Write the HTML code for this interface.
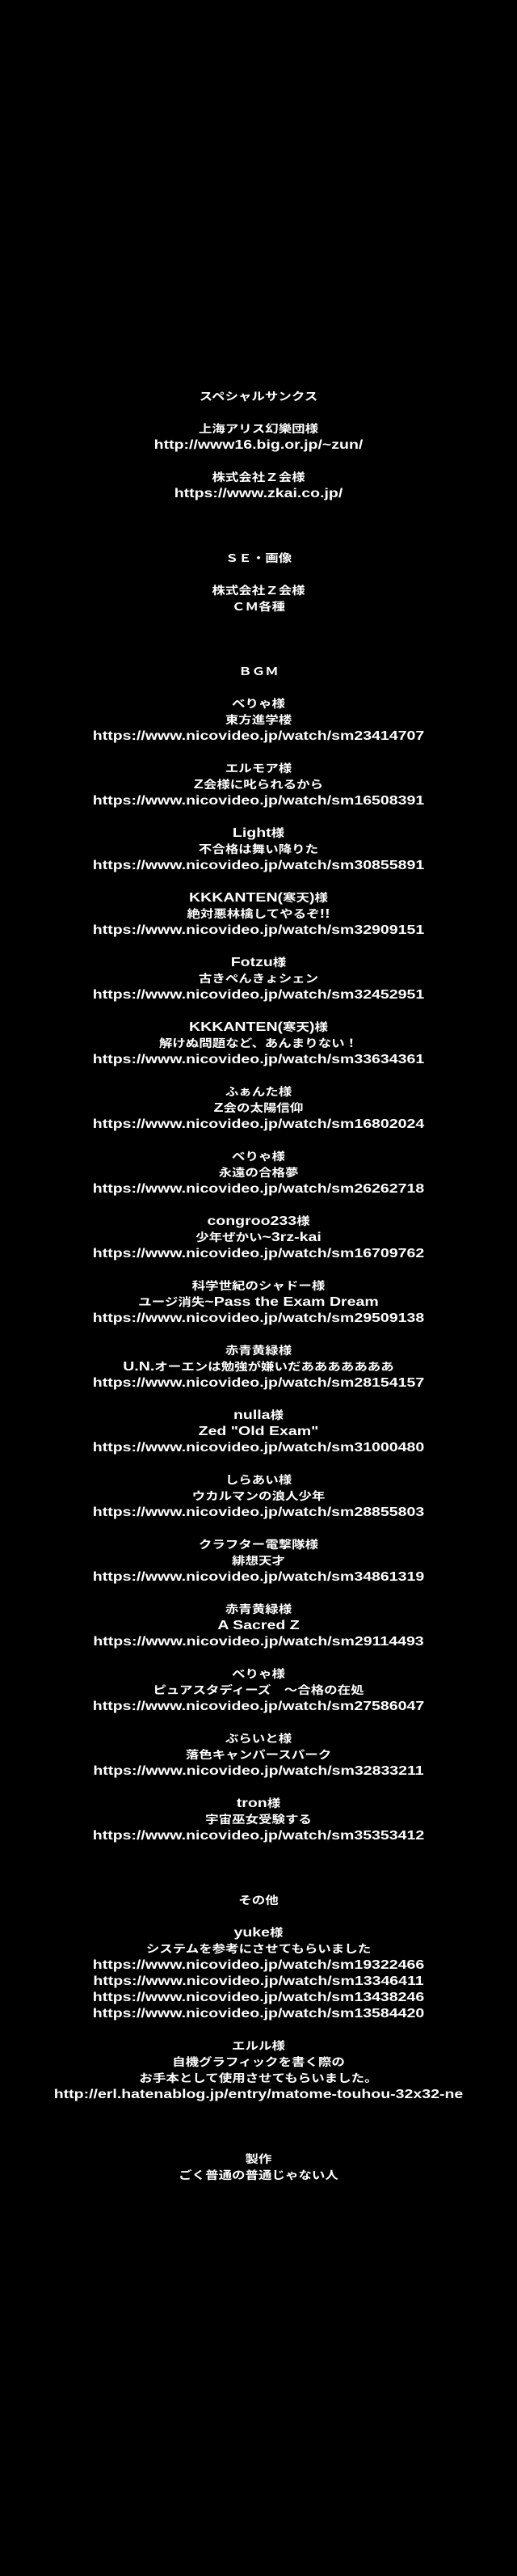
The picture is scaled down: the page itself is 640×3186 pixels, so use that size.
<!DOCTYPE html>
<html><head><meta charset="utf-8">
<style>
html,body{margin:0;padding:0;background:#000;}
body{width:640px;height:3186px;overflow:hidden;}
.c{white-space:pre;text-align:center;color:#fff;font-weight:bold;
font-family:"Liberation Sans","Noto Sans CJK JP",sans-serif;font-size:16px;line-height:20px;padding-top:481px;
transform:scaleX(1.22);transform-origin:320px 0;}
.j{font-size:13.5px;}
</style></head><body>
<div class="c"><span class="j">スペシャルサンクス</span>

<span class="j">上海アリス幻樂団様</span>
http://www16.big.or.jp/~zun/

<span class="j">株式会社Ｚ会様</span>
https://www.zkai.co.jp/



<span class="j">ＳＥ・画像</span>

<span class="j">株式会社Ｚ会様</span>
<span class="j">ＣＭ各種</span>



<span class="j">ＢＧＭ</span>

<span class="j">べりゃ様</span>
<span class="j">東方進学楼</span>
https://www.nicovideo.jp/watch/sm23414707

<span class="j">エルモア様</span>
Z<span class="j">会様に叱られるから</span>
https://www.nicovideo.jp/watch/sm16508391

Light<span class="j">様</span>
<span class="j">不合格は舞い降りた</span>
https://www.nicovideo.jp/watch/sm30855891

KKKANTEN(<span class="j">寒天</span>)<span class="j">様</span>
<span class="j">絶対悪林檎してやるぞ</span>!!
https://www.nicovideo.jp/watch/sm32909151

Fotzu<span class="j">様</span>
<span class="j">古きぺんきょシェン</span>
https://www.nicovideo.jp/watch/sm32452951

KKKANTEN(<span class="j">寒天</span>)<span class="j">様</span>
<span class="j">解けぬ問題など、あんまりない！</span>
https://www.nicovideo.jp/watch/sm33634361

<span class="j">ふぁんた様</span>
Z<span class="j">会の太陽信仰</span>
https://www.nicovideo.jp/watch/sm16802024

<span class="j">べりゃ様</span>
<span class="j">永遠の合格夢</span>
https://www.nicovideo.jp/watch/sm26262718

congroo233<span class="j">様</span>
<span class="j">少年ぜかい</span>~3rz-kai
https://www.nicovideo.jp/watch/sm16709762

<span class="j">科学世紀のシャドー様</span>
<span class="j">ユージ消失</span>~Pass the Exam Dream
https://www.nicovideo.jp/watch/sm29509138

<span class="j">赤青黄緑様</span>
U.N.<span class="j">オーエンは勉強が嫌いだあああああああ</span>
https://www.nicovideo.jp/watch/sm28154157

nulla<span class="j">様</span>
Zed "Old Exam"
https://www.nicovideo.jp/watch/sm31000480

<span class="j">しらあい様</span>
<span class="j">ウカルマンの浪人少年</span>
https://www.nicovideo.jp/watch/sm28855803

<span class="j">クラフター電撃隊様</span>
<span class="j">緋想天才</span>
https://www.nicovideo.jp/watch/sm34861319

<span class="j">赤青黄緑様</span>
A Sacred Z
https://www.nicovideo.jp/watch/sm29114493

<span class="j">べりゃ様</span>
<span class="j">ピュアスタディーズ　～合格の在処</span>
https://www.nicovideo.jp/watch/sm27586047

<span class="j">ぶらいと様</span>
<span class="j">落色キャンパースパーク</span>
https://www.nicovideo.jp/watch/sm32833211

tron<span class="j">様</span>
<span class="j">宇宙巫女受験する</span>
https://www.nicovideo.jp/watch/sm35353412



<span class="j">その他</span>

yuke<span class="j">様</span>
<span class="j">システムを参考にさせてもらいました</span>
https://www.nicovideo.jp/watch/sm19322466
https://www.nicovideo.jp/watch/sm13346411
https://www.nicovideo.jp/watch/sm13438246
https://www.nicovideo.jp/watch/sm13584420

<span class="j">エルル様</span>
<span class="j">自機グラフィックを書く際の</span>
<span class="j">お手本として使用させてもらいました。</span>
http://erl.hatenablog.jp/entry/matome-touhou-32x32-ne



<span class="j">製作</span>
<span class="j">ごく普通の普通じゃない人</span></div>
</body></html>
